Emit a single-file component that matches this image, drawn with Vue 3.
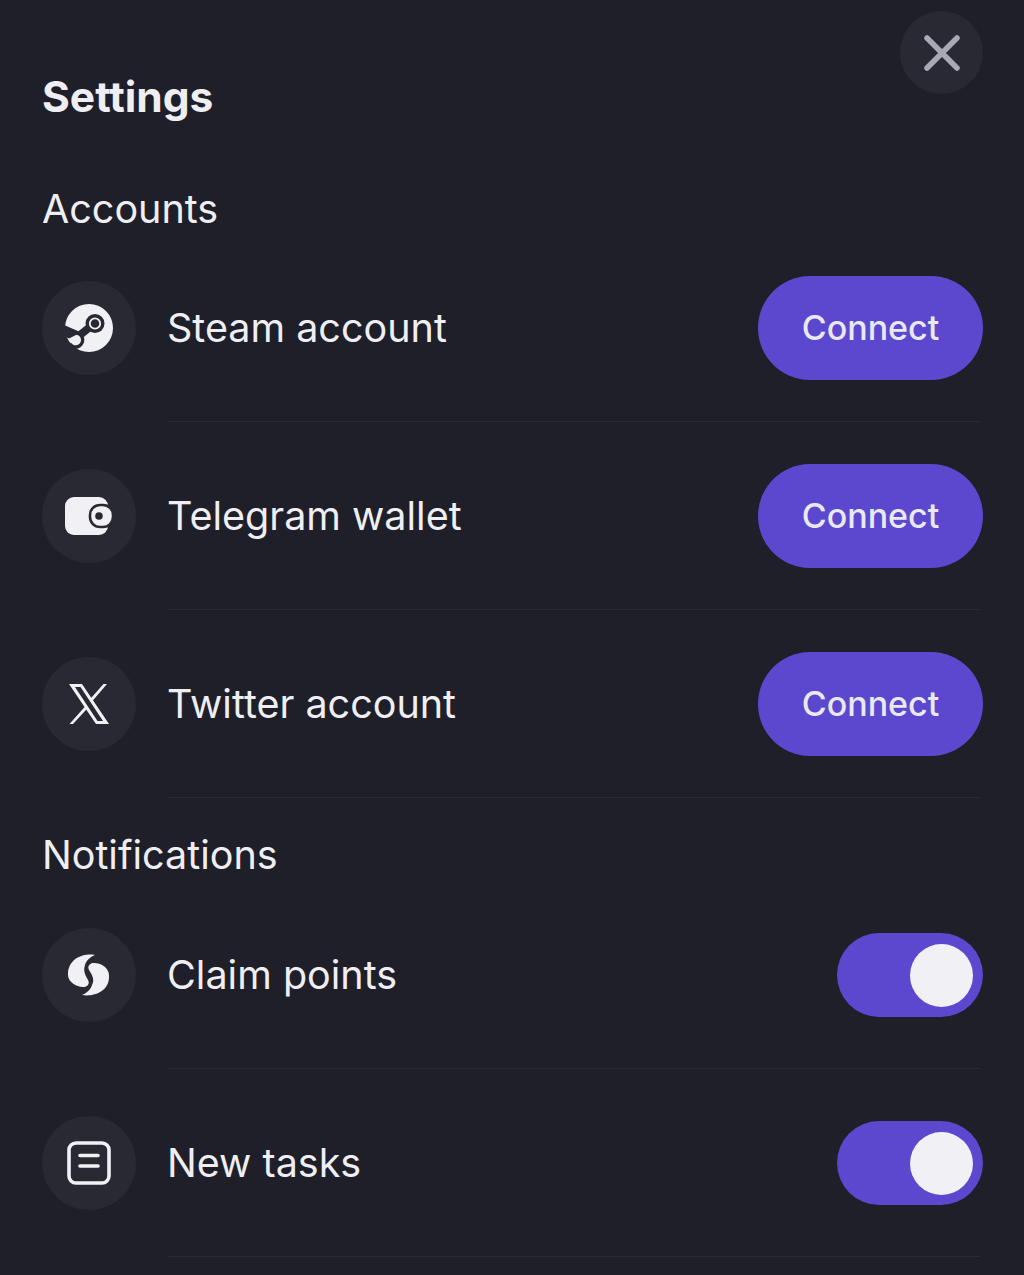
<script setup>
const accounts = [
  { id: 'steam', label: 'Steam account' },
  { id: 'wallet', label: 'Telegram wallet' },
  { id: 'x', label: 'Twitter account' }
];

const notifications = [
  { id: 'points', label: 'Claim points' },
  { id: 'tasks', label: 'New tasks' }
];
</script>

<template>
  <div class="settings">
    <button class="close" aria-label="Close">
      <svg width="36" height="36" viewBox="0 0 36 36" fill="none">
        <path d="M3 3 L33 33 M33 3 L3 33" stroke="#a9a9b5" stroke-width="5.5" stroke-linecap="round" />
      </svg>
    </button>

    <h1 class="title">Settings</h1>

    <h2 class="section first">Accounts</h2>
    <div class="group">
      <div v-for="item in accounts" :key="item.id" class="row">
        <div class="row-main">
          <div class="icon">
            <svg v-if="item.id === 'steam'" width="50" height="50" viewBox="0 0 50 50">
              <circle cx="25" cy="25" r="24" fill="#f1f1f5" />
              <path d="M0 22 L15 28.5 L12 32 L5 35.5 L0 33 Z" fill="#282932" />
              <path d="M31 20 L16 32" stroke="#282932" stroke-width="8" />
              <circle cx="31" cy="20.5" r="9.5" fill="#282932" />
              <circle cx="31" cy="20.5" r="5.2" fill="none" stroke="#f1f1f5" stroke-width="1.8" />
              <path d="M9 30.5 A7 7 0 1 1 6 41" fill="none" stroke="#282932" stroke-width="3.4" />
            </svg>
            <svg v-else-if="item.id === 'wallet'" width="50" height="40" viewBox="0 0 50 40">
              <rect x="1" y="1" width="43" height="38" rx="9" fill="#f1f1f5" />
              <rect x="26" y="9" width="23" height="22" rx="10" fill="#f1f1f5" stroke="#282932" stroke-width="2.6" />
              <circle cx="35" cy="20" r="3.8" fill="#282932" />
            </svg>
            <svg v-else-if="item.id === 'x'" width="42" height="42" viewBox="0 0 42 42">
              <path fill-rule="evenodd" d="M1 1 H14 L41 41 H28 Z M7 4 L29.5 38 H35 L12.5 4 Z" fill="#f1f1f5" />
              <path d="M35.5 1 H39 L24 18.5 L22.2 16 Z M17.5 23 L19.3 25.6 L5 41 H1.5 Z" fill="#f1f1f5" />
            </svg>
          </div>
          <span class="label">{{ item.label }}</span>
        </div>
        <button class="connect">Connect</button>
      </div>
    </div>

    <h2 class="section">Notifications</h2>
    <div class="group">
      <div v-for="item in notifications" :key="item.id" class="row">
        <div class="row-main">
          <div class="icon">
            <svg v-if="item.id === 'points'" width="44" height="42" viewBox="0 0 44 42">
              <path d="M28 1 C17 -1 2 4 1 19 C0 28 9 33 16 33 C21 33 23 29 21 26 C18 21 16 17 18 11 C19 7 23 3 28 1 Z" fill="#f1f1f5" />
              <path d="M15 41 C26 43 42 38 42 23 C43 14 34 9 27 9 C23 9 20 12 22 16 C25 21 28 25 25 31 C24 35 20 39 15 41 Z" fill="#f1f1f5" />
            </svg>
            <svg v-else-if="item.id === 'tasks'" width="44" height="44" viewBox="0 0 44 44" fill="none">
              <rect x="2" y="2" width="40" height="40" rx="7" stroke="#f1f1f5" stroke-width="3.6" />
              <path d="M13 14.5 H31 M13 25 H31" stroke="#f1f1f5" stroke-width="3.6" stroke-linecap="round" />
            </svg>
          </div>
          <span class="label">{{ item.label }}</span>
        </div>
        <div class="toggle">
          <span class="knob"></span>
        </div>
      </div>
    </div>
  </div>
</template>

<style>
html,
body {
  margin: 0;
  background: #1e1f29;
}
</style>

<style scoped>
.settings {
  box-sizing: border-box;
  position: relative;
  width: 1024px;
  height: 1275px;
  overflow: hidden;
  padding: 0 41px 0 42px;
  background: #1e1f29;
  font-family: Inter, "Liberation Sans", sans-serif;
  color: #eeeef3;
}

.close {
  position: absolute;
  top: 11px;
  right: 41px;
  display: flex;
  align-items: center;
  justify-content: center;
  width: 83px;
  height: 83px;
  padding: 0;
  border: none;
  border-radius: 50%;
  background: #282932;
}

.title {
  margin: 0;
  padding-top: 73px;
  font-size: 42.5px;
  line-height: 48px;
  font-weight: 700;
}

.section {
  margin: 0;
  padding: 35px 0 46px;
  font-size: 39.5px;
  line-height: 44px;
  font-weight: 400;
}

.section.first {
  padding-top: 66px;
  padding-bottom: 45px;
}

.group {
  display: flex;
  flex-direction: column;
  gap: 42px;
}

.row {
  position: relative;
  display: flex;
  align-items: center;
  justify-content: space-between;
  height: 104px;
  padding-bottom: 42px;
}

.row::after {
  content: "";
  position: absolute;
  left: 126px;
  right: 3px;
  bottom: 0;
  height: 1px;
  background: #2a2b35;
}

.row-main {
  display: flex;
  align-items: center;
  gap: 31px;
}

.icon {
  display: flex;
  align-items: center;
  justify-content: center;
  width: 94px;
  height: 94px;
  border-radius: 50%;
  background: #282932;
}

.label {
  font-size: 39.5px;
  line-height: 44px;
}

.connect {
  width: 225px;
  height: 104px;
  padding: 0 0 2px;
  border: none;
  border-radius: 52px;
  background: #5c48cf;
  color: #e9e9f1;
  font-family: inherit;
  font-size: 34px;
  font-weight: 500;
}

.toggle {
  display: flex;
  align-items: center;
  justify-content: flex-end;
  box-sizing: border-box;
  width: 146px;
  height: 84px;
  padding-right: 10px;
  border-radius: 42px;
  background: #5c48cf;
}

.knob {
  width: 63px;
  height: 63px;
  border-radius: 50%;
  background: #f0f0f5;
}
</style>
